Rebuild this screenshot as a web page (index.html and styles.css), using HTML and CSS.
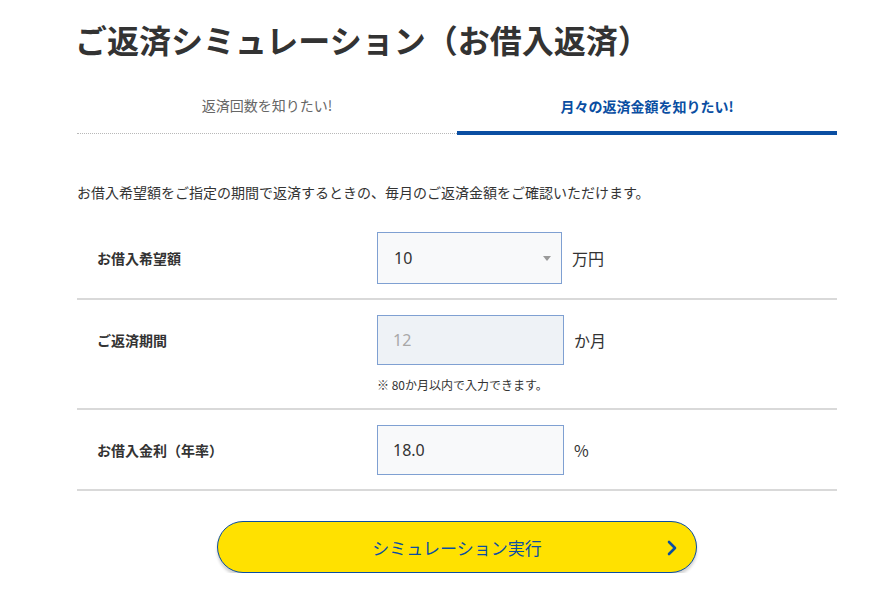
FILE: index.html
```html
<!DOCTYPE html>
<html lang="ja">
<head>
<meta charset="utf-8">
<title>ご返済シミュレーション（お借入返済）</title>
<link rel="stylesheet" href="styles.css">
</head>
<body>
<main class="sim">
  <h1 class="sim-title">ご返済シミュレーション（お借入返済）</h1>

  <nav class="tabs">
    <a class="tab" href="#">返済回数を知りたい!</a>
    <a class="tab tab-active" href="#">月々の返済金額を知りたい!</a>
  </nav>

  <p class="lead">お借入希望額をご指定の期間で返済するときの、毎月のご返済金額をご確認いただけます。</p>

  <form class="form">
    <div class="row">
      <div class="label">お借入希望額</div>
      <div class="control">
        <div class="field-line">
          <div class="select-wrap">
            <select class="select">
              <option>10</option>
            </select>
          </div>
          <span class="unit">万円</span>
        </div>
      </div>
    </div>

    <div class="row">
      <div class="label">ご返済期間</div>
      <div class="control">
        <div class="field-line">
          <input class="input input-disabled" type="text" value="12" disabled>
          <span class="unit">か月</span>
        </div>
        <p class="note">※ 80か月以内で入力できます。</p>
      </div>
    </div>

    <div class="row">
      <div class="label">お借入金利（年率）</div>
      <div class="control">
        <div class="field-line">
          <input class="input" type="text" value="18.0">
          <span class="unit">%</span>
        </div>
      </div>
    </div>

    <div class="actions">
      <button class="run-btn" type="button">
        <span class="run-text">シミュレーション実行</span>
        <svg class="run-icon" width="12" height="16" viewBox="0 0 12 16" aria-hidden="true">
          <path d="M3 2 L9 8 L3 14" fill="none" stroke="#0a4ea2" stroke-width="2.6" stroke-linecap="round" stroke-linejoin="round"/>
        </svg>
      </button>
    </div>
  </form>
</main>
</body>
</html>
```

FILE: styles.css
```css
* {
  box-sizing: border-box;
}

html, body {
  margin: 0;
  padding: 0;
  background: #ffffff;
}

body {
  font-family: "Noto Sans CJK JP", "Noto Sans", sans-serif;
  color: #333333;
}

.sim {
  width: 760px;
  margin-left: 77px;
  padding-top: 20px;
}

.sim-title {
  margin: 0 0 0 -2px;
  font-size: 32px;
  line-height: 38px;
  font-weight: 700;
  letter-spacing: 0;
  color: #333333;
}

.tabs {
  display: flex;
  margin-top: 22px;
}

.tab {
  flex: 1 1 0;
  height: 54px;
  display: flex;
  align-items: center;
  justify-content: center;
  padding-bottom: 3px;
  font-size: 14px;
  color: #666666;
  text-decoration: none;
  border-bottom: 1px dotted #b8b8b8;
}

.tab-active {
  color: #0a4ea2;
  font-weight: 700;
  border-bottom: 4px solid #0a4ea2;
  padding-bottom: 0;
  height: 55px;
}

.lead {
  margin: 47px 0 0;
  font-size: 14px;
  line-height: 21px;
  color: #333333;
}

.form {
  margin-top: 14px;
}

.row {
  display: grid;
  grid-template-columns: 300px 1fr;
  padding: 15px 0 14px;
  border-bottom: 2px solid #d9d9d9;
}

.label {
  padding-left: 20px;
  font-size: 14px;
  font-weight: 700;
  color: #333333;
  display: flex;
  align-items: center;
  height: 50px;
}

.row:first-child .label {
  height: 52px;
}

.field-line {
  display: flex;
  align-items: center;
  gap: 10px;
}

.select-wrap {
  position: relative;
  width: 185px;
  height: 52px;
}

.select-wrap::after {
  content: "";
  position: absolute;
  right: 11px;
  top: 24px;
  border-left: 4px solid transparent;
  border-right: 4px solid transparent;
  border-top: 5px solid #9a9a9a;
  pointer-events: none;
}

.select {
  appearance: none;
  -webkit-appearance: none;
  width: 100%;
  height: 100%;
  margin: 0;
  padding: 0 30px 0 16px;
  border: 1px solid #7fa0d2;
  border-radius: 0;
  background: #f8f9fa;
  font-family: "Noto Sans", "Noto Sans CJK JP", sans-serif;
  font-size: 16px;
  color: #333333;
}

.input {
  width: 187px;
  height: 50px;
  margin: 0;
  padding: 0 15px;
  border: 1px solid #7fa0d2;
  border-radius: 0;
  background: #f8f9fa;
  font-family: "Noto Sans", "Noto Sans CJK JP", sans-serif;
  font-size: 16px;
  color: #333333;
}

.input-disabled {
  background: #eef2f6;
  color: #a8a8a8;
  -webkit-text-fill-color: #a8a8a8;
  opacity: 1;
}

.unit {
  font-size: 16px;
  color: #333333;
}

.note {
  margin: 11px 0 0;
  font-size: 12px;
  line-height: 18px;
  color: #333333;
}

.actions {
  display: flex;
  justify-content: center;
  margin-top: 30px;
}

.run-btn {
  position: relative;
  width: 480px;
  height: 52px;
  border: 1px solid #0a4ea2;
  border-radius: 26px;
  background: #ffe100;
  box-shadow: 0 3px 3px rgba(0, 0, 0, 0.18);
  display: flex;
  align-items: center;
  justify-content: center;
  font-family: "Noto Sans CJK JP", "Noto Sans", sans-serif;
  font-size: 17px;
  color: #0a4ea2;
  cursor: pointer;
}

.run-icon {
  position: absolute;
  right: 18px;
  top: 18px;
}
```
